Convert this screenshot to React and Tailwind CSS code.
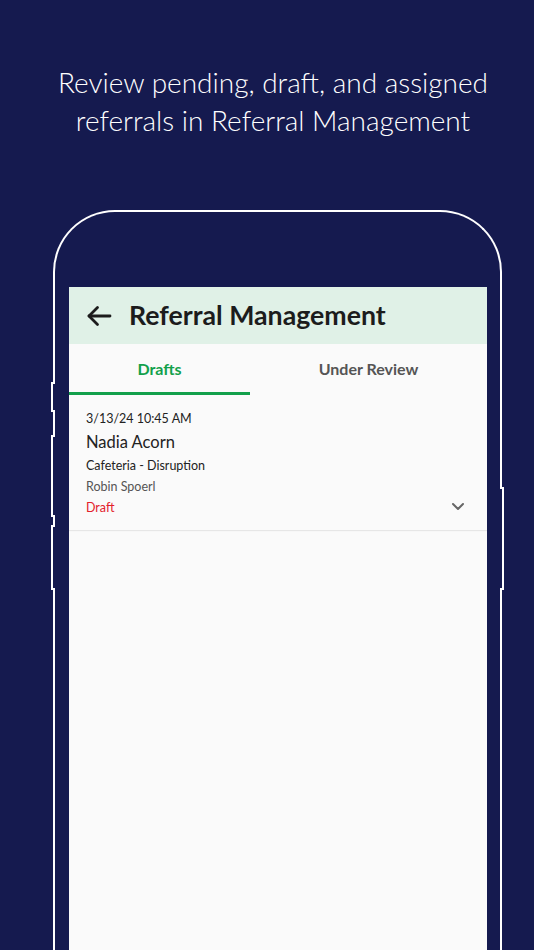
import React from "react";

export default function App() {
  return (
    <div className="w-[534px] h-[950px] overflow-hidden bg-[#151a4f] flex flex-col" style={{ fontFamily: "Lato, 'Noto Sans', sans-serif" }}>
      <div className="pt-[63px] pl-[12px] text-center text-white text-[28px] leading-[38px] font-light">
        <p>Review pending, draft, and assigned</p>
        <p>referrals in Referral Management</p>
      </div>
      <div className="relative mt-[71px] ml-[53px] w-[449px] flex-1 border-2 border-b-0 border-white rounded-t-[62px] pt-[75px] pl-[14px] pr-[13px] flex flex-col">
        <div className="absolute left-[-4px] top-[170px] w-[4px] h-[30px] border-2 border-r-0 border-white bg-[#151a4f]"></div>
        <div className="absolute left-[-4px] top-[223px] w-[4px] h-[82px] border-2 border-r-0 border-white bg-[#151a4f]"></div>
        <div className="absolute left-[-4px] top-[313px] w-[4px] h-[65px] border-2 border-r-0 border-white bg-[#151a4f]"></div>
        <div className="absolute right-[-4px] top-[275px] w-[4px] h-[103px] border-2 border-l-0 border-white bg-[#151a4f]"></div>
        <div className="flex-1 bg-[#fafafa] flex flex-col">
          <div className="h-[57px] bg-[#e0f1e7] flex items-center pl-[17px]">
            <svg width="26" height="22" viewBox="0 0 26 22" fill="none" stroke="#1c1c1c" strokeWidth="2.8" strokeLinecap="round" strokeLinejoin="round">
              <path d="M24 11H3" />
              <path d="M11.5 2.5L3 11l8.5 8.5" />
            </svg>
            <span className="ml-[17px] text-[26.7px] font-bold text-[#1c1c1c]">Referral Management</span>
          </div>
          <div className="flex h-[51px]">
            <div className="w-[181px] flex items-center justify-center border-b-[3px] border-[#12a04b] text-[16px] font-bold text-[#12a04b] pt-[1px]">Drafts</div>
            <div className="flex-1 flex items-center justify-center text-[16px] font-bold text-[#555555] pb-[2px]">Under Review</div>
          </div>
          <div className="relative h-[135px] bg-[#fafafa] shadow-[0_1px_1px_rgba(0,0,0,0.08)] pl-[17px] pt-[15px] text-[#222]">
            <div className="text-[12.5px] leading-[18px]">3/13/24 10:45 AM</div>
            <div className="text-[16.5px] leading-[23px] mt-[3px]">Nadia Acorn</div>
            <div className="text-[12.5px] leading-[19px] mt-[2px]">Cafeteria - Disruption</div>
            <div className="text-[12.5px] leading-[19px] mt-[2px] text-[#555]">Robin Spoerl</div>
            <div className="text-[12.5px] leading-[19px] mt-[2px] text-[#e3202b]">Draft</div>
            <svg className="absolute right-[22px] top-[107px]" width="14" height="9" viewBox="0 0 14 9" fill="none" stroke="#666" strokeWidth="2" strokeLinecap="round" strokeLinejoin="round">
              <path d="M2 2l5 5 5-5" />
            </svg>
          </div>
        </div>
      </div>
    </div>
  );
}
